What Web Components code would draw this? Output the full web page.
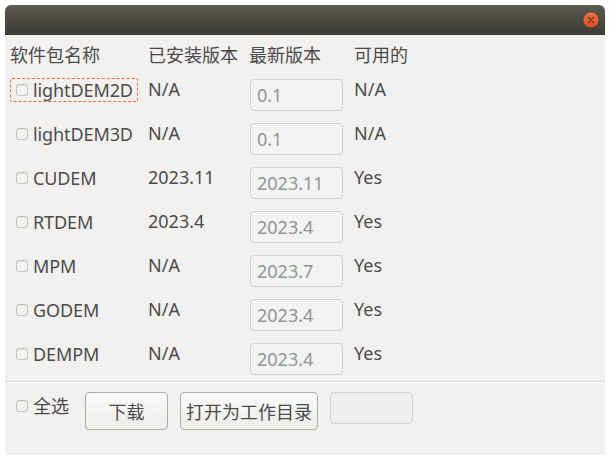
<!DOCTYPE html>
<html>
<head>
<meta charset="utf-8">
<title>软件包</title>
<style>
  html, body { margin: 0; background: #fff; }
  body { padding: 5px 0 0 5px; font-family: "Noto Sans", "Noto Sans CJK SC", sans-serif; font-size: 18px; color: #4c4c4c; }
</style>
</head>
<body>
<app-window>
  <pkg-header></pkg-header>
  <pkg-row name="lightDEM2D" installed="N/A" latest="0.1" avail="N/A" focused></pkg-row>
  <pkg-row name="lightDEM3D" installed="N/A" latest="0.1" avail="N/A"></pkg-row>
  <pkg-row name="CUDEM" installed="2023.11" latest="2023.11" avail="Yes"></pkg-row>
  <pkg-row name="RTDEM" installed="2023.4" latest="2023.4" avail="Yes"></pkg-row>
  <pkg-row name="MPM" installed="N/A" latest="2023.7" avail="Yes"></pkg-row>
  <pkg-row name="GODEM" installed="N/A" latest="2023.4" avail="Yes"></pkg-row>
  <pkg-row name="DEMPM" installed="N/A" latest="2023.4" avail="Yes"></pkg-row>
  <pkg-footer></pkg-footer>
</app-window>

<script>
class AppWindow extends HTMLElement {
  constructor () {
    super()
    this.shadow = this.attachShadow({ mode: 'open' })
  }

  connectedCallback () {
    this.shadow.innerHTML = /* html */`
      <style>
        :host { display: flex; flex-direction: column; width: 600px; height: 450px; background: #f2f1f0; border-radius: 6px 6px 0 0; overflow: hidden; }
        .title { flex: none; height: 30px; display: flex; justify-content: flex-end; align-items: center; padding-right: 6px; box-sizing: border-box; background: linear-gradient(#5c5a4f, #3c3b37); }
        .close { width: 16px; height: 16px; }
        .body { flex: 1; display: flex; flex-direction: column; }
      </style>
      <div class="title">
        <svg class="close" viewBox="0 0 16 16">
          <defs><linearGradient id="c" x1="0" y1="0" x2="0" y2="1"><stop offset="0" stop-color="#f0734a"/><stop offset="1" stop-color="#dc4a1c"/></linearGradient></defs>
          <circle cx="8" cy="8" r="7.6" fill="url(#c)"/>
          <path d="M5.4 5.4l5.2 5.2M10.6 5.4l-5.2 5.2" stroke="#4a3a30" stroke-width="1.3" stroke-linecap="round"/>
        </svg>
      </div>
      <div class="body"><slot></slot></div>
    `
  }
}

class PkgCheck extends HTMLElement {
  constructor () {
    super()
    this.attachShadow({ mode: 'open' }).innerHTML = /* html */`
      <style>
        :host { display: inline-flex; align-items: center; gap: 5px; height: 24px; padding: 0 0 0 5px; box-sizing: border-box; border: 1px dashed transparent; border-radius: 2px; white-space: nowrap; line-height: 22px; }
        :host([focused]) { border-color: #ee6c35; }
        .box { flex: none; width: 12px; height: 12px; box-sizing: border-box; border: 1px solid #c6c2bd; border-radius: 3px; background: #f4f3f2; box-shadow: inset 0 1px 1px #e2e0de; }
        .label { letter-spacing: -0.1px; }
      </style>
      <span class="box"></span><span class="label"><slot></slot></span>
    `
  }
}

class VersionInput extends HTMLElement {
  constructor () {
    super()
    this.attachShadow({ mode: 'open' }).innerHTML = /* html */`
      <style>
        :host { display: block; width: 93px; height: 32px; box-sizing: border-box; padding: 3px 6px 0; border: 1px solid #d3cfcb; border-radius: 4px; background: #f3f3f3; color: #929595; line-height: 24px; }
      </style>
      <slot></slot>
    `
  }
}

class PkgHeader extends HTMLElement {
  constructor () {
    super()
    this.attachShadow({ mode: 'open' }).innerHTML = /* html */`
      <style>
        :host { display: grid; grid-template-columns: 138px 101px 105px 1fr; height: 44px; padding: 8px 0 0 5px; box-sizing: border-box; line-height: 24px; }
      </style>
      <span>软件包名称</span><span>已安装版本</span><span>最新版本</span><span>可用的</span>
    `
  }
}

class PkgRow extends HTMLElement {
  constructor () {
    super()
    this.shadow = this.attachShadow({ mode: 'open' })
  }

  connectedCallback () {
    const focused = this.hasAttribute('focused') ? 'focused' : ''
    this.shadow.innerHTML = /* html */`
      <style>
        :host { display: grid; grid-template-columns: 138px 102px 104px 1fr; height: 44px; padding-left: 5px; box-sizing: border-box; line-height: 20px; }
        .check { margin-top: -1px; justify-self: start; width: 128px; }
      </style>
      <pkg-check class="check" ${focused}>${this.getAttribute('name')}</pkg-check>
      <span>${this.getAttribute('installed')}</span>
      <version-input>${this.getAttribute('latest')}</version-input>
      <span>${this.getAttribute('avail')}</span>
    `
  }
}

class PkgFooter extends HTMLElement {
  constructor () {
    super()
    this.attachShadow({ mode: 'open' }).innerHTML = /* html */`
      <style>
        :host { display: flex; align-items: flex-start; margin-top: -6px; padding: 10px 0 0 5px; border-top: 1px solid #dcd9d6; box-shadow: inset 0 1px 0 #fbfafa; }
        .all { margin-top: 2px; width: 75px; flex: none; }
        button { height: 38px; margin: 0 12px 0 0; padding: 0; box-sizing: border-box; border: 1px solid #b0aca6; border-radius: 4px; background: linear-gradient(#fbfafa, #ececea); color: inherit; font: inherit; }
        .dl { width: 83px; }
        .open { width: 138px; }
        .empty { width: 83px; height: 32px; box-sizing: border-box; border: 1px solid #d3cfcb; border-radius: 4px; background: #eeeeee; }
      </style>
      <pkg-check class="all">全选</pkg-check>
      <button class="dl">下载</button>
      <button class="open">打开为工作目录</button>
      <div class="empty"></div>
    `
  }
}

customElements.define('app-window', AppWindow)
customElements.define('pkg-check', PkgCheck)
customElements.define('version-input', VersionInput)
customElements.define('pkg-header', PkgHeader)
customElements.define('pkg-row', PkgRow)
customElements.define('pkg-footer', PkgFooter)
</script>
</body>
</html>
